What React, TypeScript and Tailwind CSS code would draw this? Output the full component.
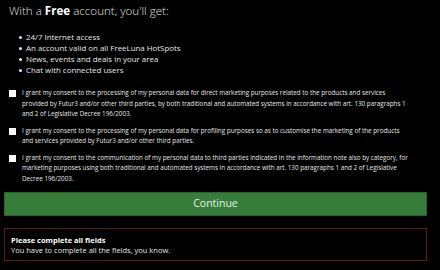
import React from "react";

const consents = [
  "I grant my consent to the processing of my personal data for direct marketing purposes related to the products and services provided by Futur3 and/or other third parties, by both traditional and automated systems in accordance with art. 130 paragraphs 1 and 2 of Legislative Decree 196/2003.",
  "I grant my consent to the processing of my personal data for profiling purposes so as to customise the marketing of the products and services provided by Futur3 and/or other third parties.",
  "I grant my consent to the communication of my personal data to third parties indicated in the information note also by category, for marketing purposes using both traditional and automated systems in accordance with art. 130 paragraphs 1 and 2 of Legislative Decree 196/2003.",
];

const perks = [
  "24/7 Internet access",
  "An account valid on all FreeLuna HotSpots",
  "News, events and deals in your area",
  "Chat with connected users",
];

export default function App() {
  return (
    <div
      className="w-[440px] h-[270px] bg-black text-[#e6e6e6] overflow-hidden"
      style={{ fontFamily: '"Open Sans", sans-serif' }}
    >
      <div className="pl-[4px] w-[427px]">
        <h1 className="pl-[5px] pt-[1px] text-[11.6px] leading-[20px] font-light text-[#e0e0e0]">
          With a <span className="font-bold text-white">Free</span> account, you'll get:
        </h1>
        <ul className="mt-[11px] pl-[15px] text-[7.9px] leading-[11px]">
          {perks.map((p) => (
            <li key={p} className="flex items-center gap-[4px]">
              <span className="w-[3px] h-[3px] rounded-full bg-[#e6e6e6] shrink-0" />
              <span>{p}</span>
            </li>
          ))}
        </ul>
        <div className="mt-[12px] flex flex-col gap-[6px] pl-[5px]">
          {consents.map((t, i) => (
            <div key={i} className="flex items-start gap-[6px]">
              <div className="mt-[2px] w-[7px] h-[7px] bg-white shrink-0" />
              <p className="text-[6.3px] leading-[10.5px] pr-[15px]">{t}</p>
            </div>
          ))}
        </div>
        <button className="mt-[8px] w-full h-[24px] bg-[#367d39] border border-[#2a602c] text-[10.5px] text-[#e8f2e8]">
          Continue
        </button>
        <div className="mt-[12px] border border-[#5c1c1e] px-[6px] pt-[6px] pb-[5px] text-[7.5px] leading-[10px]">
          <div className="font-bold text-white">Please complete all fields</div>
          <div>You have to complete all the fields, you know.</div>
        </div>
      </div>
    </div>
  );
}
